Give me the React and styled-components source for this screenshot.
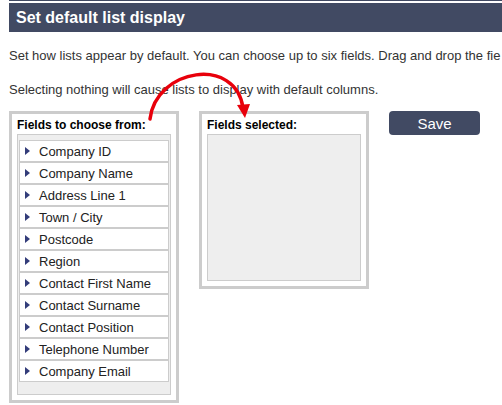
import React from 'react'
import styled, { createGlobalStyle } from 'styled-components'

const Global = createGlobalStyle`
  body {
    margin: 0;
    background: #fff;
    font-family: "Liberation Sans", Arial, sans-serif;
  }
`;

const Page = styled.div`
  position: relative;
  width: 502px;
  height: 405px;
  overflow: hidden;
  padding-left: 9px;
  box-sizing: border-box;
`;

const TopRule = styled.div`
  border-top: 1px solid #414a63;
  padding-top: 2px;
`;

const Header = styled.h1`
  margin: 0;
  height: 29px;
  line-height: 29px;
  background: #414a63;
  color: #fff;
  font-size: 16px;
  font-weight: bold;
  padding-left: 7px;
`;

const Para = styled.p`
  margin: ${(p) => p.$top}px 0 0;
  font-size: 13px;
  line-height: 15px;
  color: #333;
  white-space: nowrap;
`;

const Row = styled.div`
  display: flex;
  align-items: flex-start;
  gap: 20px;
  margin-top: 14px;
`;

const Box = styled.div`
  width: 170px;
  box-sizing: border-box;
  border: 3px solid #ccc;
  padding: 3px 5px 5px;
`;

const Label = styled.div`
  font-size: 12px;
  font-weight: bold;
  color: #000;
  line-height: 17px;
`;

const List = styled.ul`
  list-style: none;
  margin: 0;
  padding: 5px 1px 12px;
  background: #eee;
  border: 1px solid #ccc;
`;

const Item = styled.li`
  display: flex;
  align-items: center;
  height: 20px;
  background: #fff;
  border: 1px solid #ccc;
  font-size: 13px;
  color: #222;
  padding-left: 5px;
`;

const Tri = styled.span`
  width: 0;
  height: 0;
  border-top: 4px solid transparent;
  border-bottom: 4px solid transparent;
  border-left: 5px solid #333d7a;
  margin-right: 9px;
`;

const Drop = styled.div`
  height: 145px;
  background: #eee;
  border: 1px solid #ccc;
`;

const SaveButton = styled.button`
  width: 91px;
  height: 24px;
  border: none;
  border-radius: 4px;
  background: #414a63;
  color: #fff;
  font-family: "Liberation Sans", Arial, sans-serif;
  font-size: 15px;
  padding: 0;
  cursor: pointer;
`;

const Arrow = styled.svg`
  position: absolute;
  left: 0;
  top: 0;
  pointer-events: none;
`;

const fields = [
  'Company ID',
  'Company Name',
  'Address Line 1',
  'Town / City',
  'Postcode',
  'Region',
  'Contact First Name',
  'Contact Surname',
  'Contact Position',
  'Telephone Number',
  'Company Email',
]

const App = () => {
  return (
    <Page>
      <Global />
      <TopRule>
        <Header>Set default list display</Header>
      </TopRule>
      <Para $top={16}>Set how lists appear by default. You can choose up to six fields. Drag and drop the fie</Para>
      <Para $top={19}>Selecting nothing will cause lists to display with default columns.</Para>
      <Row>
        <Box>
          <Label>Fields to choose from:</Label>
          <List>
            {fields.map((f) => (
              <Item key={f}>
                <Tri />
                {f}
              </Item>
            ))}
          </List>
        </Box>
        <Box>
          <Label>Fields selected:</Label>
          <Drop />
        </Box>
        <SaveButton>Save</SaveButton>
      </Row>
      <Arrow width="502" height="405">
        <path d="M150,119 C156,68 236,56 243,108" fill="none" stroke="#e8000b" strokeWidth="3.5" strokeLinecap="round" />
        <polygon points="237,105 250,104 245,118" fill="#e8000b" />
      </Arrow>
    </Page>
  )
}

export default App
